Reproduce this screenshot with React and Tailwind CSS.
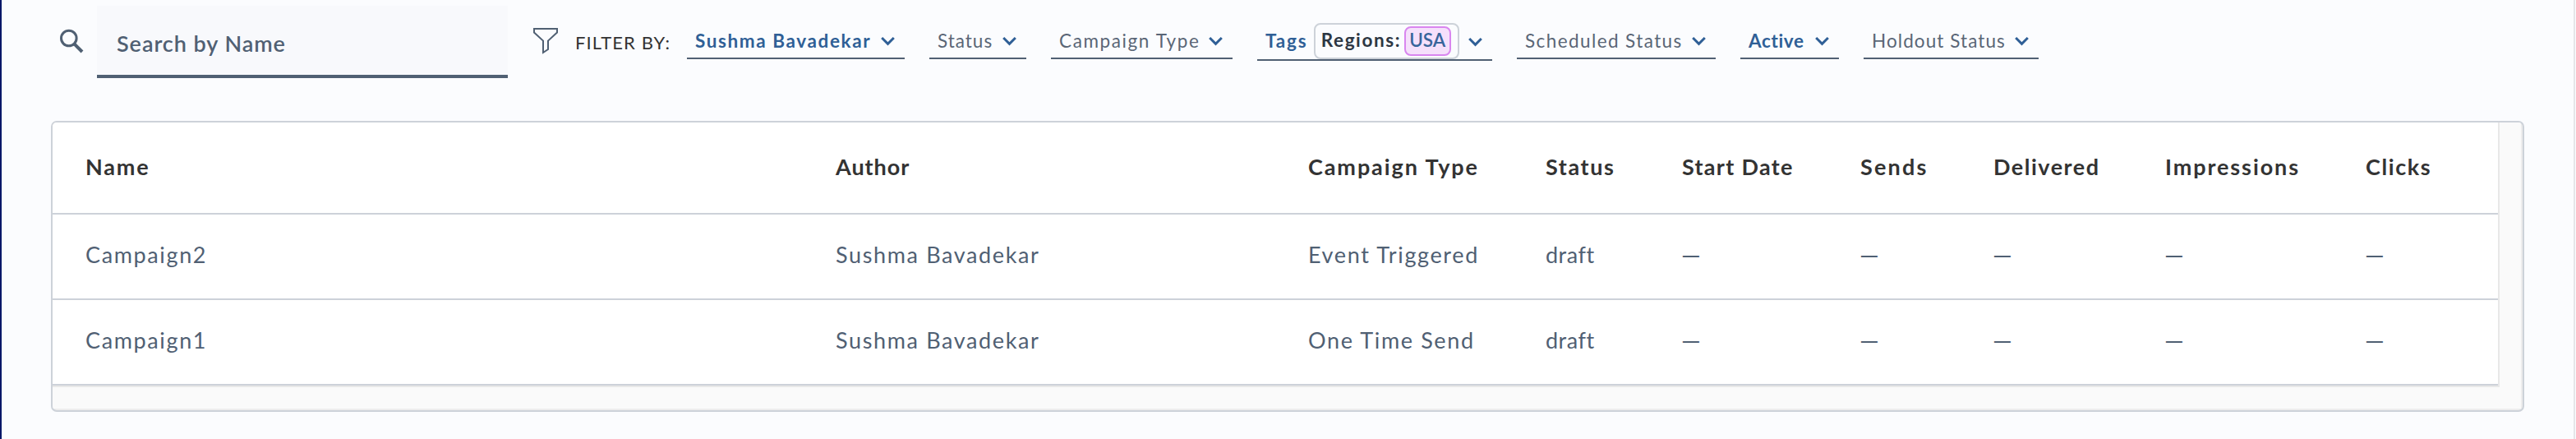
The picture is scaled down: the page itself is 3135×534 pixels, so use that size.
import React from 'react';

const filters = [
    { label: 'Sushma Bavadekar', active: true, box: 'w-[265px]', spacing: 'tracking-[1.6px]' },
    { label: 'Status', box: 'w-[118px]', spacing: 'tracking-[1px]' },
    { label: 'Campaign Type', box: 'w-[221px]', spacing: 'tracking-[1.6px]' },
    { label: 'Tags', active: true, tag: { group: 'Regions:', value: 'USA' }, box: 'w-[286px]', spacing: 'tracking-[1.8px]' },
    { label: 'Scheduled Status', box: 'w-[242px]', spacing: 'tracking-[1.41px]' },
    { label: 'Active', active: true, box: 'w-[120px]', spacing: 'tracking-[0.65px]' },
    { label: 'Holdout Status', box: 'w-[213px]', spacing: 'tracking-[1.08px]' },
];

const columns = [
    { label: 'Name', spacing: 'tracking-[1.8px]' },
    { label: 'Author', spacing: 'tracking-[0.95px]' },
    { label: 'Campaign Type', spacing: 'tracking-[1.9px]' },
    { label: 'Status', spacing: 'tracking-[1.6px]' },
    { label: 'Start Date', spacing: 'tracking-[1.3px]' },
    { label: 'Sends', spacing: 'tracking-[2.2px]' },
    { label: 'Delivered', spacing: 'tracking-[1.5px]' },
    { label: 'Impressions', spacing: 'tracking-[1.9px]' },
    { label: 'Clicks', spacing: 'tracking-[1.6px]' },
];

const campaigns = [
    { name: 'Campaign2', author: 'Sushma Bavadekar', type: 'Event Triggered', status: 'draft' },
    { name: 'Campaign1', author: 'Sushma Bavadekar', type: 'One Time Send', status: 'draft' },
];

const rowGrid = 'grid grid-cols-[913px_575px_289px_166px_217px_162px_209px_244px_201px] items-center border-b-2 border-[#cdd2d9]';

const SearchIcon = () => (
    <svg className="mt-[35px] h-[32px] w-[32px] shrink-0" viewBox="0 0 32 32" fill="none" stroke="#506073">
        <circle cx="11.8" cy="11.5" r="9.3" strokeWidth="3" />
        <path d="M18.6 18.6L28 28" strokeWidth="4" />
    </svg>
);

const FilterIcon = () => (
    <svg className="mt-[34px] h-[32px] w-[30px] shrink-0" viewBox="0 0 30 32" fill="none" stroke="#506073" strokeWidth="2">
        <path d="M1 1.1H29V5.6L18 15.6V26L12 30V15.6L1 5.6V1.1Z" />
    </svg>
);

const Chevron = () => (
    <svg className="mt-[2px] h-[12px] w-[17px] shrink-0" viewBox="0 0 17 12" fill="none" stroke="#2f5f96" strokeWidth="3">
        <path d="M1.2 2L8.5 9.3L15.8 2" />
    </svg>
);

const Filter = ({ filter }) => (
    <button
        className={`flex items-center justify-between border-b-2 border-[#506073] pr-[12px] pl-[10px] ${filter.box} ${filter.tag ? 'h-[46px]' : 'h-[44px]'}`}
    >
        <span className={`whitespace-nowrap ${filter.tag ? '' : 'pt-[2px]'} ${filter.spacing} ${filter.active ? 'font-bold text-[#2f5f96]' : 'text-[#5a6676]'}`}>
            {filter.label}
        </span>
        {filter.tag && (
            <span className="mr-[4px] flex h-[44px] w-[177px] items-center justify-between rounded-[8px] border-2 border-[#cdd2d9] pr-[8px] pl-[7px]">
                <span className="pb-[2px] font-bold tracking-[1.6px] text-[#2d3743]">{filter.tag.group}</span>
                <span className="flex h-[36px] w-[57px] items-center justify-center rounded-[8px] border-2 border-[#d986ef] bg-[#f5e0fb] pb-[2px] font-semibold text-[#38659b]">
                    {filter.tag.value}
                </span>
            </span>
        )}
        <Chevron />
    </button>
);

const App = () => {
    return (
        <div className="flex h-[534px] w-full border-l-2 border-[#001767] bg-[#fbfcfe] font-['Lato',sans-serif]">
            <div className="flex-1 pl-[60px]">
                <div className="flex h-[147px] items-start pl-[10px]">
                    <SearchIcon />
                    <input
                        type="text"
                        placeholder="Search by Name"
                        className="mt-[7px] ml-[14px] h-[88px] w-[500px] border-b-4 border-[#506073] bg-[#f8f9fc] pt-[7px] pl-[24px] text-[27px] font-semibold tracking-[0.95px] outline-none placeholder:text-[#506073]"
                    />
                    <div className="w-[31px]"></div>
                    <FilterIcon />
                    <span className="mt-[28px] ml-[21px] flex h-[44px] w-[136px] items-center pt-[2px] text-[22px] tracking-[1.1px] text-[#333333]">
                        FILTER BY:
                    </span>
                    <div className="mt-[28px] flex items-start gap-[30px] text-[22.5px]">
                        {filters.map((filter) => (
                            <Filter key={filter.label} filter={filter} />
                        ))}
                    </div>
                </div>

                <div className="h-[354px] w-[3010px] overflow-hidden rounded-[7px] border-2 border-[#cdd2d9] bg-[#ededed] pr-[2px] pb-[2px]">
                    {/* scrollbar tracks sit to the right of and under the table */}
                    <div className="h-full bg-[#fafafa]">
                        <div className="h-[322px] w-[2978px] bg-[#e8e8e8]">
                            <div className="w-[2976px] bg-white text-[27px]">
                                <div className={`${rowGrid} h-[112px] pb-[1px] font-bold text-[#333333]`}>
                                    {columns.map((col) => (
                                        <div key={col.label} className={`pl-[40px] whitespace-nowrap ${col.spacing}`}>{col.label}</div>
                                    ))}
                                </div>
                                {campaigns.map((c) => (
                                    <div key={c.name} className={`${rowGrid} h-[104px] pb-[3px] tracking-[1.63px] text-[#506073]`}>
                                        <div className="pl-[40px]">{c.name}</div>
                                        <div className="pl-[40px]">{c.author}</div>
                                        <div className="pl-[40px]">{c.type}</div>
                                        <div className="pl-[40px] tracking-[0.5px]">{c.status}</div>
                                        {['start', 'sends', 'delivered', 'impressions', 'clicks'].map((key) => (
                                            <div key={key} className="pb-[3px] pl-[39px] text-[30px] leading-[36px]">—</div>
                                        ))}
                                    </div>
                                ))}
                            </div>
                        </div>
                    </div>
                </div>
            </div>
            <div className="mr-px w-[2px] bg-[#e5e6e9]"></div>
        </div>
    );
};

export default App;
